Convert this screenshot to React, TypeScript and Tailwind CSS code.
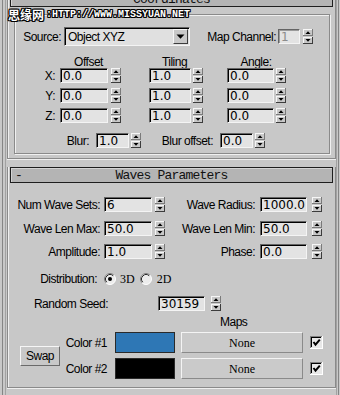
import type { ReactNode } from 'react';

/* ── Small drawn controls ───────────────────────────────────────────────────── */

function Spinner({ className = '' }: { className?: string }) {
  return (
    <svg width="10" height="15" viewBox="0 0 10 15" className={`block shrink-0 ${className}`}>
      <rect x="0" y="0" width="10" height="15" fill="#c8c8c8" />
      <rect x="0" y="0" width="10" height="1" fill="#f6f6f6" />
      <rect x="0" y="0" width="1" height="7" fill="#f6f6f6" />
      <rect x="0" y="6" width="10" height="1" fill="#7a7a7a" />
      <rect x="9" y="0" width="1" height="7" fill="#7a7a7a" />
      <rect x="0" y="8" width="10" height="1" fill="#f6f6f6" />
      <rect x="0" y="8" width="1" height="7" fill="#f6f6f6" />
      <rect x="0" y="14" width="10" height="1" fill="#3c3c3c" />
      <rect x="9" y="8" width="1" height="7" fill="#3c3c3c" />
      <polygon points="2.5,5 7.5,5 5,2.2" fill="#000" />
      <polygon points="2.5,10 7.5,10 5,12.8" fill="#000" />
    </svg>
  );
}

function Radio({ checked }: { checked?: boolean }) {
  return (
    <svg width="12" height="12" viewBox="0 0 12 12" className="block shrink-0">
      <circle cx="6" cy="6" r="5.5" fill="#ececec" />
      <path d="M2.11 9.89A5.5 5.5 0 0 1 9.89 2.11" stroke="#808080" fill="none" />
      <path d="M9.89 2.11A5.5 5.5 0 0 1 2.11 9.89" stroke="#ffffff" fill="none" />
      <path d="M2.82 9.18A4.5 4.5 0 0 1 9.18 2.82" stroke="#2a2a2a" fill="none" />
      {checked && <circle cx="6" cy="6" r="2" fill="#000" />}
    </svg>
  );
}

function CheckBox() {
  return (
    <svg width="13" height="13" viewBox="0 0 13 13" className="block shrink-0">
      <rect x="0" y="0" width="13" height="13" fill="#ffffff" />
      <rect x="0" y="0" width="12" height="12" fill="#808080" />
      <rect x="1" y="1" width="11" height="11" fill="#dfdfdf" />
      <rect x="1" y="1" width="10" height="10" fill="#000" />
      <rect x="2" y="2" width="10" height="10" fill="#e8e8e8" />
      <polyline points="3.5,6 5.5,8.6 9.8,3.6" stroke="#000" strokeWidth="2" fill="none" />
    </svg>
  );
}

/* ── Fields ─────────────────────────────────────────────────────────────────── */

function Field({ value, className, muted }: { value: string; className: string; muted?: boolean }) {
  return (
    <div
      className={`flex h-[15px] shrink-0 items-center overflow-hidden border border-t-[#646464] border-l-[#646464] border-r-[#f4f4f4] border-b-[#f4f4f4] bg-[#e3e3e3] pl-[2px] font-['DejaVu_Sans',sans-serif] text-[12px] leading-none tracking-normal ${
        muted ? 'text-[#8c8c8c] shadow-[inset_1px_1px_0_#9a9a9a]' : 'text-black shadow-[inset_1px_1px_0_#000]'
      } ${className}`}
    >
      {value}
    </div>
  );
}

function Label({ children, className }: { children: ReactNode; className: string }) {
  return <span className={`shrink-0 whitespace-nowrap text-right ${className}`}>{children}</span>;
}

function RolloutHeader({ title, sign }: { title: string; sign?: string }) {
  return (
    <div className="mx-[2px] grid h-[16px] grid-cols-[20px_1fr_20px] items-center border border-[#1e1e1e] bg-[#b4b4b4] font-['Liberation_Mono',monospace] text-[13px] leading-none tracking-[-0.8px] text-[#111] shadow-[inset_1px_1px_0_#d4d4d4]">
      <span className="pl-[4px]">{sign}</span>
      <span className="pt-[1px] text-center">{title}</span>
      <span />
    </div>
  );
}

/* ── App ────────────────────────────────────────────────────────────────────── */

export default function App() {
  return (
    <div className="relative h-[395px] w-[340px] overflow-hidden bg-[#c8c8c8] font-['Liberation_Sans',Arial,sans-serif] text-[12px] leading-[14px] tracking-[-0.5px] text-black">
      <div className="ml-[2px] h-full w-[337px] border-x border-[#858585]">
        <div className="ml-[2px] mr-[1px] flex h-full flex-col border-x border-[#a2a2a2]">
          {/* Coordinates rollout */}
          <div className="-mt-[9px] ml-[1px] flex flex-col border-x border-b border-[#8a8a8a] pb-[4px] shadow-[inset_1px_0_0_#efefef,0_1px_0_#efefef]">
            <RolloutHeader title="Coordinates" />
            <div className="ml-[6px] mr-[5px] mt-[7px] flex flex-col border border-[#8a8a8a] pb-[5px] pt-[12px] shadow-[inset_1px_1px_0_#f0f0f0,1px_1px_0_#f0f0f0]">
              <div className="flex h-[19px] items-center">
                <Label className="w-[49px] pr-[3px]">Source:</Label>
                <div className="flex h-[19px] w-[126px] shrink-0 items-center border border-t-[#646464] border-l-[#646464] border-r-[#f4f4f4] border-b-[#f4f4f4] bg-[#e0e0e0] shadow-[inset_1px_1px_0_#000]">
                  <span className="flex-1 pl-[3px]">Object XYZ</span>
                  <div className="mr-[1px] flex h-[15px] w-[15px] items-center justify-center border border-t-[#f6f6f6] border-l-[#f6f6f6] border-r-[#3c3c3c] border-b-[#3c3c3c] bg-[#c8c8c8]">
                    <svg width="9" height="5" viewBox="0 0 9 5" className="block">
                      <polygon points="0.5,0.5 8.5,0.5 4.5,4.8" fill="#000" />
                    </svg>
                  </div>
                </div>
                <Label className="w-[87px] pr-[1px]">Map Channel:</Label>
                <Field value="1" muted className="ml-[1px] w-[22px]" />
                <Spinner className="ml-[3px]" />
              </div>

              <div className="mt-[9px] flex h-[13px] items-center">
                <span className="w-[45px] shrink-0" />
                <span className="w-[57px] shrink-0 text-center">Offset</span>
                <span className="w-[115px] shrink-0 text-center">Tiling</span>
                <span className="w-[48px] shrink-0 text-center">Angle:</span>
              </div>

              <div className="flex flex-col gap-[5px]">
                {['X:', 'Y:', 'Z:'].map((axis) => (
                  <div key={axis} className="flex h-[15px] items-center">
                    <Label className="w-[42px] pr-[2px]">{axis}</Label>
                    <Field value="0.0" className="ml-[3px] w-[48px]" />
                    <Spinner className="ml-[3px]" />
                    <Field value="1.0" className="ml-[28px] w-[42px]" />
                    <Spinner className="ml-[2px]" />
                    <Field value="0.0" className="ml-[24px] w-[47px]" />
                    <Spinner className="ml-[2px]" />
                  </div>
                ))}
              </div>

              <div className="mt-[10px] flex h-[15px] items-center">
                <Label className="w-[78px] pr-[4px]">Blur:</Label>
                <Field value="1.0" className="ml-[3px] w-[33px]" />
                <Spinner className="ml-[2px]" />
                <Label className="w-[75px] pr-[3px]">Blur offset:</Label>
                <Field value="0.0" className="ml-[4px] w-[33px]" />
                <Spinner className="ml-[2px]" />
              </div>
            </div>
          </div>

          {/* Waves Parameters rollout */}
          <div className="ml-[1px] mt-[8px] flex flex-col border-x border-b border-[#8a8a8a] pb-[8px] shadow-[inset_1px_0_0_#efefef,0_1px_0_#efefef]">
            <RolloutHeader title="Waves Parameters" sign="-" />

            {[
              ['Num Wave Sets:', '6', 'Wave Radius:', '1000.0', 'mt-[14px]'],
              ['Wave Len Max:', '50.0', 'Wave Len Min:', '50.0', 'mt-[9px]'],
              ['Amplitude:', '1.0', 'Phase:', '0.0', 'mt-[8px]'],
            ].map(([l1, v1, l2, v2, mt]) => (
              <div key={l1} className={`flex h-[15px] items-center ${mt}`}>
                <Label className="w-[93px] pr-[1px]">{l1}</Label>
                <Field value={v1} className="ml-[3px] w-[48px]" />
                <Spinner className="ml-[3px]" />
                <Label className="w-[91px] pr-[1px]">{l2}</Label>
                <Field value={v2} className="ml-[4px] w-[47px]" />
                <Spinner className="ml-[5px]" />
              </div>
            ))}

            <div className="mt-[12px] flex h-[15px] items-center">
              <Label className="w-[90px] pr-[1px]">Distribution:</Label>
              <span className="ml-[6px]">
                <Radio checked />
              </span>
              <span className="ml-[4px] font-['Liberation_Serif',serif] text-[12px] tracking-normal">3D</span>
              <span className="ml-[5px]">
                <Radio />
              </span>
              <span className="ml-[5px] font-['Liberation_Serif',serif] text-[12px] tracking-normal">2D</span>
            </div>

            <div className="mt-[10px] flex h-[15px] items-center">
              <Label className="w-[101px] pr-[1px]">Random Seed:</Label>
              <Field value="30159" className="ml-[49px] w-[47px]" />
              <Spinner className="ml-[6px]" />
            </div>

            <div className="mt-[5px] h-[12px] pl-[212px] leading-[12px]">Maps</div>

            <div className="mt-[4px] flex items-center">
              <div className="ml-[12px] flex h-[20px] w-[40px] shrink-0 items-center justify-center border border-t-[#f6f6f6] border-l-[#f6f6f6] border-r-[#6a6a6a] border-b-[#6a6a6a] bg-[#c8c8c8]">
                Swap
              </div>
              <div className="flex flex-col gap-[5px]">
                {[
                  ['Color #1', 'bg-[#2e77b5]'],
                  ['Color #2', 'bg-black'],
                ].map(([label, swatch]) => (
                  <div key={label} className="flex h-[21px] items-center">
                    <Label className="w-[48px] pr-[1px]">{label}</Label>
                    <div className={`ml-[7px] h-[21px] w-[60px] shrink-0 border border-[#2a2a2a] ${swatch}`} />
                    <div className="ml-[6px] flex h-[21px] w-[122px] shrink-0 items-center justify-center border border-t-[#f4f4f4] border-l-[#f4f4f4] border-r-[#8a8a8a] border-b-[#8a8a8a] bg-[#cacaca] font-['Liberation_Serif',serif] text-[12px] tracking-normal">
                      None
                    </div>
                    <span className="ml-[7px]">
                      <CheckBox />
                    </span>
                  </div>
                ))}
              </div>
            </div>
          </div>
        </div>
      </div>

      {/* watermark over the panel */}
      <div className="absolute left-[8px] top-[8px] flex items-center whitespace-nowrap tracking-normal text-white [text-shadow:1px_0_0_#000,-1px_0_0_#000,0_1px_0_#000,0_-1px_0_#000,1px_1px_0_#000,-1px_-1px_0_#000,1px_-1px_0_#000,-1px_1px_0_#000]">
        <span className="font-['Noto_Sans_CJK_SC',sans-serif] text-[12px] font-bold leading-[14px]">思缘网</span>
        <span className="ml-[2px] font-['Liberation_Mono',monospace] text-[10px] font-bold uppercase leading-[12px]">:http://www.missyuan.net</span>
      </div>
    </div>
  );
}
